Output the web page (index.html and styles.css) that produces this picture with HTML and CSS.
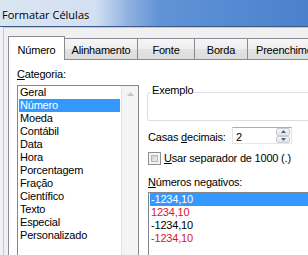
FILE: index.html
```html
<!DOCTYPE html>
<html lang="pt">
<head>
<meta charset="utf-8">
<title>Formatar Células</title>
<link rel="stylesheet" href="styles.css">
</head>
<body>
<div class="window">
  <div class="titlebar">Formatar Células</div>
  <div class="frame">
    <div class="client">
      <div class="tabs">
        <div class="tab selected">Número</div>
        <div class="tab t-alin">Alinhamento</div>
        <div class="tab t-fonte">Fonte</div>
        <div class="tab t-borda">Borda</div>
        <div class="tab t-pre">Preenchimento</div>
      </div>
      <div class="panel">
        <div class="left">
          <div class="label"><u>C</u>ategoria:</div>
          <div class="listbox cat">
            <div class="items">
              <div class="item">Geral</div>
              <div class="item sel">Número</div>
              <div class="item">Moeda</div>
              <div class="item">Contábil</div>
              <div class="item">Data</div>
              <div class="item">Hora</div>
              <div class="item">Porcentagem</div>
              <div class="item">Fração</div>
              <div class="item">Científico</div>
              <div class="item">Texto</div>
              <div class="item">Especial</div>
              <div class="item">Personalizado</div>
            </div>
            <div class="vscroll">
              <svg width="7" height="4" viewBox="0 0 7 4"><path d="M0 4 L3.5 0 L7 4 Z" fill="#c4c4c4"/></svg>
            </div>
          </div>
        </div>
        <div class="right">
          <div class="group">
            <div class="legend">Exemplo</div>
          </div>
          <div class="decimals">
            <div class="dlabel">Casas <u>d</u>ecimais:</div>
            <div class="spin-input">
              <span class="val">2</span>
              <div class="spinner">
                <div class="sbtn up"><svg width="5" height="3" viewBox="0 0 5 3"><path d="M0 3 L2.5 0 L5 3 Z" fill="#4f6283"/></svg></div>
                <div class="sbtn down"><svg width="5" height="3" viewBox="0 0 5 3"><path d="M0 0 L2.5 3 L5 0 Z" fill="#4f6283"/></svg></div>
              </div>
            </div>
          </div>
          <div class="check">
            <span class="box"><span class="inner"></span></span>
            <span class="ctext"><u>U</u>sar separador de 1000 (.)</span>
          </div>
          <div class="label neg-label"><u>N</u>úmeros negativos:</div>
          <div class="listbox neg">
            <div class="nitem sel">-1234,10</div>
            <div class="nitem red">1234,10</div>
            <div class="nitem">-1234,10</div>
            <div class="nitem red">-1234,10</div>
          </div>
        </div>
      </div>
    </div>
  </div>
</div>
</body>
</html>
```

FILE: styles.css
```css
* { box-sizing: border-box; }
html, body { margin: 0; padding: 0; }
body {
  width: 308px;
  height: 255px;
  overflow: hidden;
  background: #eef2f7;
  font-family: "Liberation Sans", Arial, sans-serif;
  font-size: 11px;
  line-height: 13px;
  letter-spacing: -0.2px;
  color: #000;
}
.window { width: 430px; }
.titlebar {
  height: 27px;
  padding: 3px 0 0 2px;
  line-height: 23px;
  font-family: "Open Sans", sans-serif;
  font-size: 11px;
  letter-spacing: 0;
  border-bottom: 1px solid #3d5a86;
  background: linear-gradient(90deg, #dae5f2 0px, #d3e0f1 95px, #8fb1e0 128px, #6093d6 160px, #568ad2 230px, #4d80cb 308px);
}
.frame { padding: 0 0 0 3px; }
.client {
  border-top: 1px solid #c6cad0;
  border-left: 1px solid #c6cad0;
  background: #f0f0f0;
  padding: 8px 0 0 4px;
}
.tabs { display: flex; align-items: flex-end; }
.tab {
  height: 21px;
  padding-top: 5px;
  text-align: center;
  white-space: nowrap;
  border-top: 1px solid #898c95;
  border-right: 1px solid #898c95;
  background: linear-gradient(#f6f6f6, #eeeeee 50%, #e3e3e3 51%, #dcdcdc);
  flex: none;
}
.tab.selected {
  width: 57px;
  height: 24px;
  padding-top: 7px;
  border-left: 1px solid #898c95;
  background: #fff;
  margin-bottom: -1px;
  position: relative;
  z-index: 1;
}
.t-alin { width: 73px; }
.t-fonte { width: 57px; }
.t-borda { width: 53px; }
.t-pre { width: 100px; text-align: left; padding-left: 8px; }

.panel {
  display: flex;
  background: #fff;
  border-top: 1px solid #898c95;
  border-left: 1px solid #898c95;
  padding: 8px 0 0 8px;
  height: 260px;
}
.left { width: 122px; flex: none; }
.label { height: 13px; padding-left: 0; white-space: nowrap; }
.listbox.cat {
  margin-top: 4px;
  border: 1px solid #828790;
  height: 200px;
  display: flex;
}
.cat .items { flex: 1; padding: 0 1px; }
.item { height: 13px; padding-left: 1px; white-space: nowrap; }
.item.sel, .nitem.sel { background: #3399ff; color: #fff; }
.vscroll {
  width: 17px;
  flex: none;
  background: #f4f4f4;
  border-left: 1px solid #e3e3e3;
  display: flex;
  justify-content: center;
  align-items: flex-start;
  padding-top: 6px;
}
.vscroll svg { display: block; }

.right { margin-left: 8px; flex: 1; padding-top: 24px; }
.group {
  border: 1px solid #d5dfe5;
  border-radius: 3px;
  height: 29px;
  padding-left: 3px;
}
.legend {
  width: fit-content;
  margin-top: -9px;
  padding: 0 1px;
  background: #fff;
}
.decimals { display: flex; align-items: flex-start; margin-top: 6px; }
.dlabel { width: 85px; padding: 4px 0 0 1px; white-space: nowrap; }
.spin-input {
  width: 60px;
  height: 17px;
  border: 1px solid;
  border-color: #abadb3 #dbdfe6 #e3e9ef #e2e3ea;
  display: flex;
  justify-content: space-between;
  align-items: flex-start;
  padding-left: 3px;
}
.val { padding-top: 3px; line-height: 13px; }
.spinner {
  width: 14px;
  height: 15px;
  margin-right: 1px;
  display: flex;
  flex-direction: column;
}
.sbtn {
  flex: 1;
  border: 1px solid #c9cdd3;
  border-radius: 2px;
  background: linear-gradient(#f5f5f5, #e4e4e4);
  display: flex;
  justify-content: center;
  align-items: center;
}
.sbtn svg { display: block; }
.check { display: flex; align-items: center; margin-top: 8px; }
.box {
  width: 13px;
  height: 13px;
  margin-left: 1px;
  border: 1px solid #8f8f8f;
  background: #f4f4f4;
  padding: 2px;
  flex: none;
}
.box .inner {
  display: block;
  width: 100%;
  height: 100%;
  border: 1px solid #b2b6bc;
  background: linear-gradient(135deg, #cdd0d6, #eeeeee);
}
.ctext { margin-left: 3px; white-space: nowrap; }
.neg-label { margin-top: 11px; padding-left: 1px; }
.listbox.neg {
  margin-top: 3px;
  margin-left: 1px;
  border: 1px solid #828790;
  height: 120px;
  padding: 0 1px;
}
.nitem { height: 13px; padding-left: 1px; white-space: nowrap; }
.nitem.red { color: #dd1133; }
```
